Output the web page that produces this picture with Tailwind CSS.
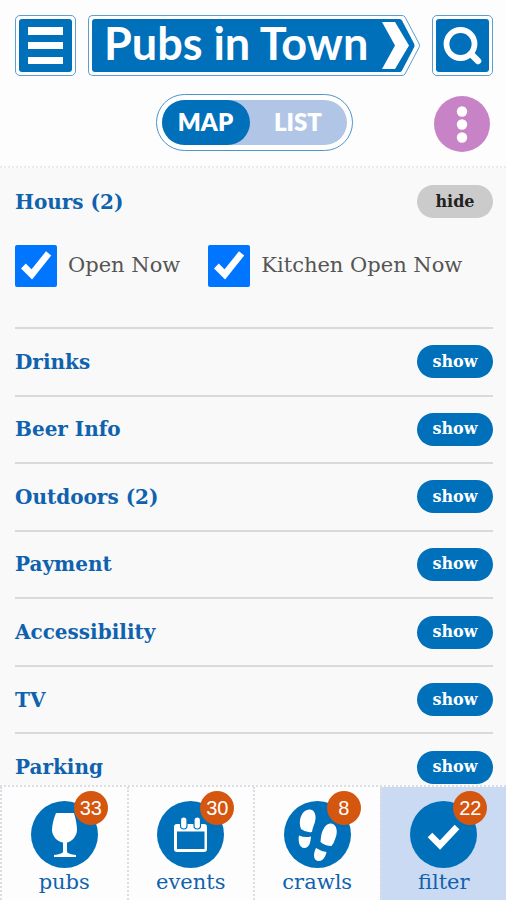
<!DOCTYPE html>
<html lang="en">
<head>
<meta charset="utf-8">
<meta name="viewport" content="width=device-width, initial-scale=1">
<title>Pubs in Town</title>
<script src="https://cdn.jsdelivr.net/npm/@tailwindcss/browser@4"></script>
</head>
<body class="flex h-screen flex-col overflow-hidden bg-[#fdfdfe] font-['DejaVu_Serif',serif] text-[#0f62ae]">

<header class="shrink-0 border-b-2 border-dotted border-[#e9e9ee] pt-[15px] pr-[13px] pb-[14px] pl-[15px]">
  <div class="flex gap-3">
    <button type="button" aria-label="Menu" class="size-[61px] shrink-0 rounded-[5px] border border-[#5b9fd0] bg-white p-[3px]">
      <svg viewBox="0 0 53 53" class="size-full rounded-[3px] bg-[#0070bb]" fill="#fff"><path d="M9 8h35v8H9zM9 23h35v7H9zM9 38h35v7H9z"/></svg>
    </button>
    <h1 class="flex h-[61px] flex-1 font-['Lato',sans-serif] text-[45px] leading-none font-bold whitespace-nowrap text-white">
      <span class="flex-1 rounded-l-[5px] border border-r-0 border-[#5b9fd0] bg-white py-[3px] pl-[3px]">
        <span class="flex h-full items-center rounded-l-[3px] bg-[#0070bb] pb-1 pl-3">Pubs in Town</span>
      </span>
      <svg viewBox="0 0 44 61" class="h-[61px] w-11 shrink-0" aria-hidden="true">
        <path d="M0 .5H26Q28 .5 29 2L43 28.500Q44 30.500 43 32.500L29 59Q28 60.500 26 60.500H0" fill="#fff" stroke="#5b9fd0"/>
        <path d="M0 4H24Q25 4 26 5.500L38 28.500Q39 30.500 38 32.500L26 55.500Q25 57 24 57H0z" fill="#0070bb"/>
        <path d="M6 7H19L33 30.500L19 54H6L19 30.500z" fill="#fff"/>
      </svg>
    </h1>
    <button type="button" aria-label="Search" class="size-[61px] shrink-0 rounded-[5px] border border-[#5b9fd0] bg-white p-[3px]">
      <svg viewBox="0 0 53 53" class="size-full rounded-[3px] bg-[#0070bb]" fill="none" stroke="#fff"><circle cx="24.500" cy="25" r="14" stroke-width="5.800"/><path d="M35 35l7 7" stroke-width="6.500" stroke-linecap="round"/></svg>
    </button>
  </div>
  <div class="mt-4 grid grid-cols-[1fr_auto_1fr] items-center">
    <span></span>
    <div role="group" aria-label="View" class="h-[57px] w-[197px] rounded-full border border-[#4b96cc] bg-white p-[5px]">
      <div class="flex h-full rounded-full bg-[#b1c6e6] font-['Lato',sans-serif] text-2xl leading-none font-extrabold text-white">
        <button type="button" aria-pressed="true" class="w-[88px] rounded-full bg-[#0070bb]">MAP</button>
        <button type="button" aria-pressed="false" class="flex-1">LIST</button>
      </div>
    </div>
    <button type="button" aria-label="More options" class="mt-1 mr-[3px] size-14 justify-self-end rounded-full bg-[#c883c6]">
      <svg viewBox="0 0 56 56" fill="#fff"><circle cx="28" cy="15.500" r="5.200"/><circle cx="28" cy="28.500" r="5.200"/><circle cx="28" cy="41.500" r="5.200"/></svg>
    </button>
  </div>
</header>

<main class="min-h-0 flex-1 overflow-hidden bg-[#f9f9f9] pr-[13px] pl-[15px]">
  <section class="pt-[17px] pb-10">
    <div class="flex items-center justify-between">
      <h2 class="text-xl font-bold">Hours (2)</h2>
      <button type="button" class="h-[33px] w-[76px] rounded-full bg-[#cbcbcb] text-base font-bold text-[#222]">hide</button>
    </div>
    <div class="mt-[27px] flex gap-7 text-[21px] whitespace-nowrap text-[#555]">
      <label class="flex items-center gap-[11px]"><input type="checkbox" checked class="size-[42px] shrink-0">Open Now</label>
      <label class="flex items-center gap-[11px]"><input type="checkbox" checked class="size-[42px] shrink-0">Kitchen Open Now</label>
    </div>
  </section>
  <ul class="grid h-[473px] auto-rows-fr text-xl font-bold">
    <li class="flex items-center justify-between border-t-2 border-[#dadada]"><h2>Drinks</h2><button type="button" class="h-[33px] w-[76px] rounded-full bg-[#0070bb] text-base text-white">show</button></li>
    <li class="flex items-center justify-between border-t-2 border-[#dadada]"><h2>Beer Info</h2><button type="button" class="h-[33px] w-[76px] rounded-full bg-[#0070bb] text-base text-white">show</button></li>
    <li class="flex items-center justify-between border-t-2 border-[#dadada]"><h2>Outdoors (2)</h2><button type="button" class="h-[33px] w-[76px] rounded-full bg-[#0070bb] text-base text-white">show</button></li>
    <li class="flex items-center justify-between border-t-2 border-[#dadada]"><h2>Payment</h2><button type="button" class="h-[33px] w-[76px] rounded-full bg-[#0070bb] text-base text-white">show</button></li>
    <li class="flex items-center justify-between border-t-2 border-[#dadada]"><h2>Accessibility</h2><button type="button" class="h-[33px] w-[76px] rounded-full bg-[#0070bb] text-base text-white">show</button></li>
    <li class="flex items-center justify-between border-t-2 border-[#dadada]"><h2>TV</h2><button type="button" class="h-[33px] w-[76px] rounded-full bg-[#0070bb] text-base text-white">show</button></li>
    <li class="flex items-center justify-between border-t-2 border-[#dadada]"><h2>Parking</h2><button type="button" class="h-[33px] w-[76px] rounded-full bg-[#0070bb] text-base text-white">show</button></li>
  </ul>
</main>

<nav class="grid h-[115px] shrink-0 grid-cols-4 border-t-2 border-dotted border-[#dcdde4] text-[21px] leading-7">
  <a href="#pubs" class="flex flex-col items-center border-l-2 border-dotted border-[#dcdde4] pt-3.5">
    <span class="relative">
      <svg viewBox="0 0 67 67" class="size-[67px]"><circle cx="33.500" cy="33.500" r="33.500" fill="#0070bb"/><path fill="#fff" d="M25 12H43Q46 22 46 29C46 35 41 40.500 36 41.500V51Q37 53 45 54V56H23V54Q31 53 32 51V41.500C26 40.500 21 35 21 29Q21 22 25 12z"/></svg>
      <span class="absolute -top-2.5 -right-2.5 flex size-[34px] items-center justify-center rounded-full bg-[#d4560f] font-['Liberation_Sans',sans-serif] text-xl text-white">33</span>
    </span>pubs
  </a>
  <a href="#events" class="flex flex-col items-center border-l-2 border-dotted border-[#dcdde4] pt-3.5">
    <span class="relative">
      <svg viewBox="0 0 67 67" class="size-[67px]"><circle cx="33.500" cy="33.500" r="33.500" fill="#0070bb"/><path fill="#fff" fill-rule="evenodd" d="M20 23H47Q50 23 50 26V48Q50 51 47 51H20Q17 51 17 48V26Q17 23 20 23zM20 30.500V48H47.500V30.500z"/><g fill="#fff" stroke="#0070bb" stroke-width="1.200"><rect x="23.500" y="16" width="6.500" height="12" rx="3.200"/><rect x="37" y="16" width="6.500" height="12" rx="3.200"/></g></svg>
      <span class="absolute -top-2.5 -right-2.5 flex size-[34px] items-center justify-center rounded-full bg-[#d4560f] font-['Liberation_Sans',sans-serif] text-xl text-white">30</span>
    </span>events
  </a>
  <a href="#crawls" class="flex flex-col items-center border-l-2 border-dotted border-[#dcdde4] pt-3.5">
    <span class="relative">
      <svg viewBox="0 0 67 67" class="size-[67px]"><circle cx="33.500" cy="33.500" r="33.500" fill="#0070bb"/><g fill="#fff"><path d="M25 8.500C30 8 32 13 31.500 18C31 23 28.500 26 28 31Q22 32 17 28C14 20 17 9.500 25 8.500z"/><path d="M15 34.500Q21 37 27 35.500C26.500 42 25 47 20.500 47C15 47 14 40 15 34.500z"/><path d="M47 22.500C53 23 54 31 51.500 37Q50 42 47.500 45Q41 45 36.500 41C37 36 37 33 39 29Q42 22 47 22.500z"/><path d="M32 47Q36.500 50 42.500 51C42 55 39 60 35 60C29 60 29 53 32 47z"/></g></svg>
      <span class="absolute -top-2.5 -right-2.5 flex size-[34px] items-center justify-center rounded-full bg-[#d4560f] font-['Liberation_Sans',sans-serif] text-xl text-white">8</span>
    </span>crawls
  </a>
  <a href="#filter" aria-current="page" class="flex flex-col items-center border-l-2 border-dotted border-[#dcdde4] bg-[#cadaf2] pt-3.5">
    <span class="relative">
      <svg viewBox="0 0 67 67" class="size-[67px]"><circle cx="33.500" cy="33.500" r="33.500" fill="#0070bb"/><path d="M20 34l10 10L47 26" fill="none" stroke="#fff" stroke-width="6.500"/></svg>
      <span class="absolute -top-2.5 -right-2.5 flex size-[34px] items-center justify-center rounded-full bg-[#d4560f] font-['Liberation_Sans',sans-serif] text-xl text-white">22</span>
    </span>filter
  </a>
</nav>
</body>
</html>
